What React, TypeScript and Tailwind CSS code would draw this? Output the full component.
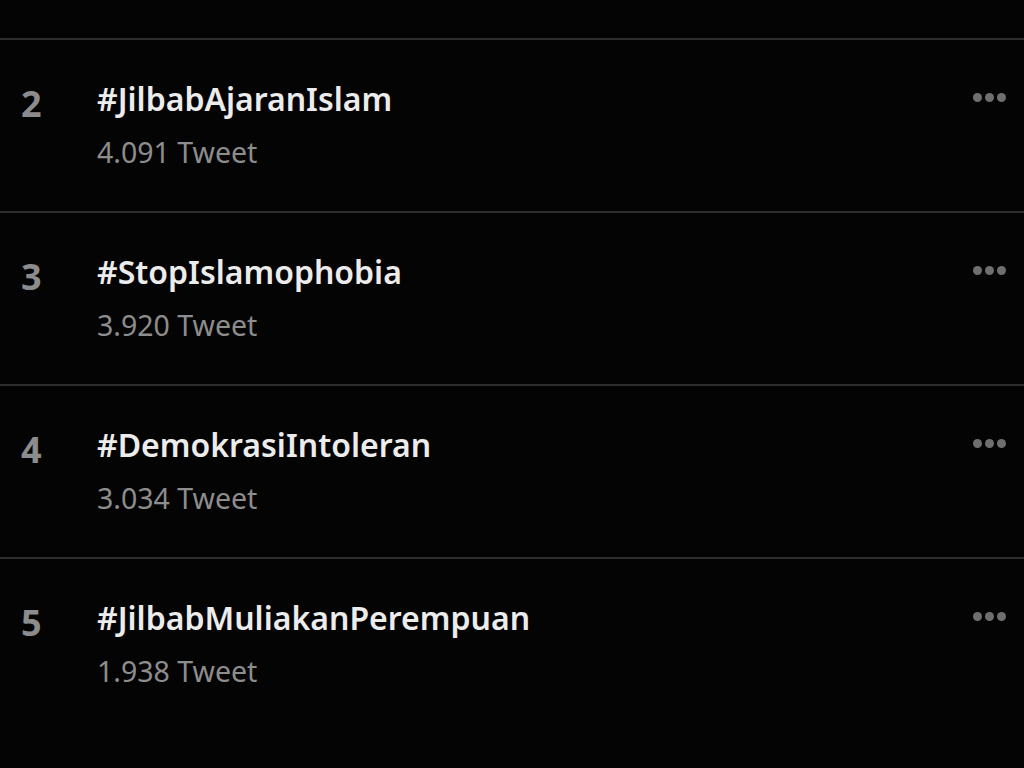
const trends = [
  { rank: 2, tag: '#JilbabAjaranIslam', count: '4.091 Tweet' },
  { rank: 3, tag: '#StopIslamophobia', count: '3.920 Tweet' },
  { rank: 4, tag: '#DemokrasiIntoleran', count: '3.034 Tweet' },
  { rank: 5, tag: '#JilbabMuliakanPerempuan', count: '1.938 Tweet' },
];

const Dots = () => (
  <div className="flex gap-[3px] pt-[1px]">
    <span className="w-[9px] h-[9px] rounded-full bg-[#6f6f6f]" />
    <span className="w-[9px] h-[9px] rounded-full bg-[#6f6f6f]" />
    <span className="w-[9px] h-[9px] rounded-full bg-[#6f6f6f]" />
  </div>
);

export default function App() {
  return (
    <div className="w-[1024px] h-[768px] bg-[#040404] overflow-hidden font-['Noto_Sans','Open_Sans',sans-serif]">
      <div className="h-[38px]" />
      {trends.map((t) => (
        <div key={t.rank} className="h-[173px] border-t-2 border-[#2e2e2e] flex pl-[21px] pr-[18px] pt-[36px]">
          <div className="w-[76px] text-[36px] font-bold text-[#8c8c8c] leading-none pt-[10px]">{t.rank}</div>
          <div className="flex-1">
            <div className="text-[32px] font-semibold text-[#ececec] leading-[46px]">{t.tag}</div>
            <div className="text-[28.5px] text-[#8d8d8d] leading-[36px] mt-[12px]">{t.count}</div>
          </div>
          <div className="pt-[16px]">
            <Dots />
          </div>
        </div>
      ))}
    </div>
  );
}
